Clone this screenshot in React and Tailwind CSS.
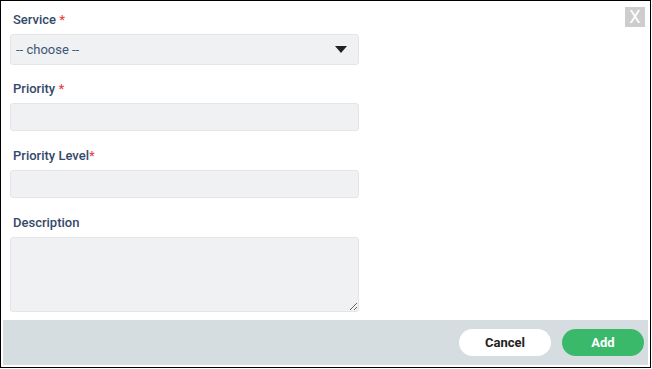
export default function App() {
  const label = "pl-[3px] text-[13px] font-medium leading-[15px] text-[#34496a]";
  const field = "w-[349px] rounded-[3px] border border-[#e3e5e8] bg-[#f0f1f3]";

  return (
    <div className="w-[652px] h-[369px] bg-white" style={{ fontFamily: "Roboto, 'Liberation Sans', sans-serif" }}>
      <div className="relative flex h-[368px] w-[651px] flex-col border border-black bg-white p-[2px]">
        <button className="absolute right-[5px] top-[6px] flex h-[20px] w-[20px] items-center justify-center bg-[#cdcdcd] text-[18px] font-normal leading-none text-white">
          X
        </button>

        <div className="flex flex-1 flex-col px-[7px] pt-[9px]">
          <label className={label}>
            Service <span className="text-[#e54848]">*</span>
          </label>
          <div className={`${field} mt-[7px] flex h-[31px] items-center justify-between pl-[5px] pr-[11px]`}>
            <span className="text-[13px] text-[#3d5577]">-- choose --</span>
            <svg width="12" height="7" viewBox="0 0 12 7">
              <path d="M0 0 L12 0 L6 7 Z" fill="#222" />
            </svg>
          </div>

          <label className={`${label} mt-[16px]`}>
            Priority <span className="text-[#e54848]">*</span>
          </label>
          <div className={`${field} mt-[7px] h-[28px]`} />

          <label className={`${label} mt-[17px]`}>
            Priority Level<span className="text-[#e54848]">*</span>
          </label>
          <div className={`${field} mt-[7px] h-[28px]`} />

          <label className={`${label} mt-[17px]`}>Description</label>
          <textarea className={`${field} mt-[7px] h-[75px] resize-y outline-none`} />
        </div>

        <div className="flex h-[45px] items-center justify-end gap-[11px] bg-[#d6dde1] pr-[4px]">
          <button className="h-[27px] w-[92px] rounded-full bg-white text-[13px] font-bold text-[#222]">
            Cancel
          </button>
          <button className="h-[27px] w-[82px] rounded-full bg-[#3bb96a] text-[13px] font-bold text-white">
            Add
          </button>
        </div>
      </div>
    </div>
  );
}
